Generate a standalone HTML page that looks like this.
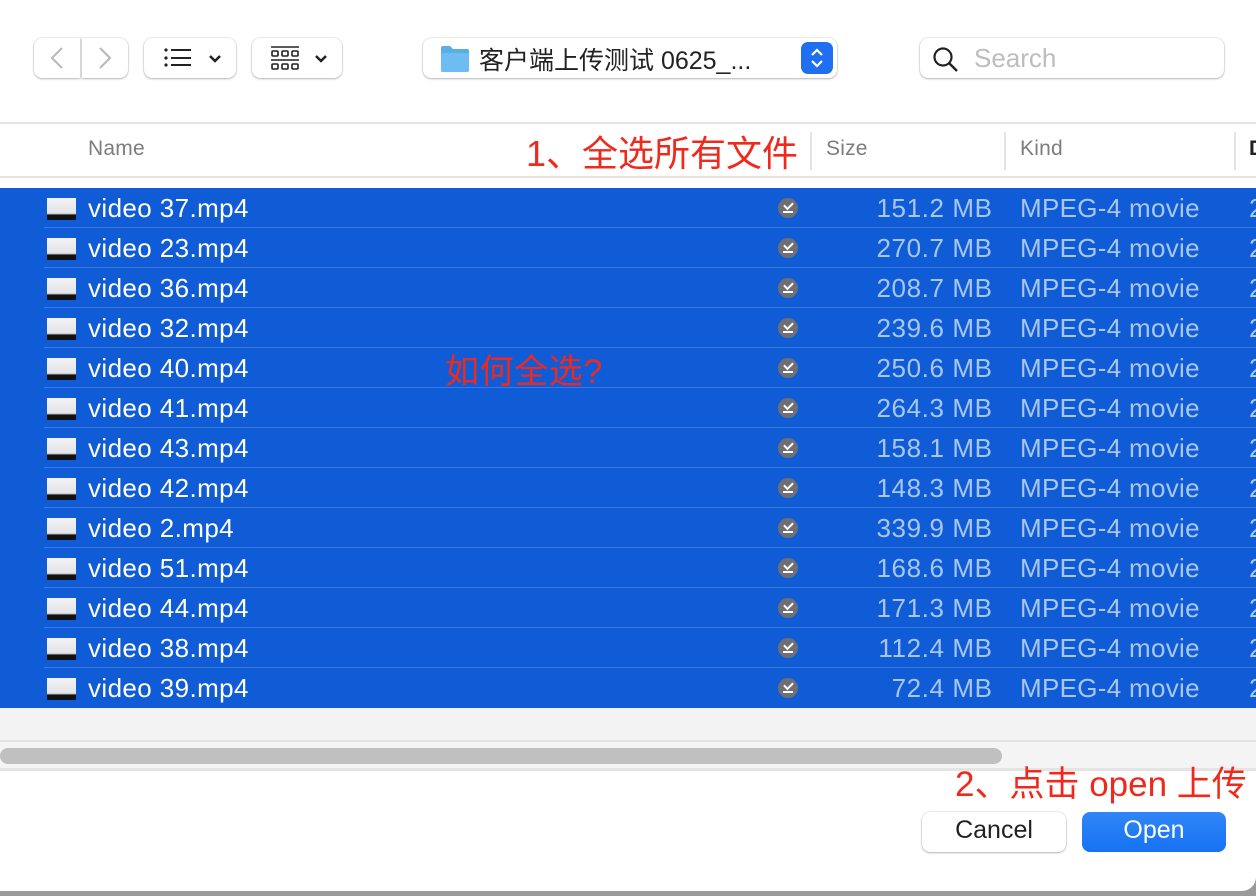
<!DOCTYPE html>
<html><head><meta charset="utf-8"><style>
*{margin:0;padding:0;box-sizing:border-box}
body{width:1256px;height:896px;overflow:hidden;background:#9a9a9a;font-family:"Liberation Sans","Noto Sans CJK SC",sans-serif;position:relative}
.win{position:absolute;left:0;top:0;width:1256px;height:891px;background:#fff;border-bottom-right-radius:14px;overflow:hidden}
.btn{position:absolute;background:#fff;border-radius:8px;box-shadow:0 0 0 0.5px rgba(0,0,0,.12),0 1px 2px rgba(0,0,0,.25)}
.abs{position:absolute}
.hdr{position:absolute;top:122px;left:0;width:1256px;height:56px;border-top:2px solid #e3e3e3;border-bottom:2px solid #e3e3e3;background:#fff}
.hdr span{position:absolute;top:13px;font-size:21px;color:#7d7d7d;letter-spacing:0.2px}
.sep{position:absolute;top:8px;width:2px;height:38px;background:#e3e3e3}
.rows{position:absolute;top:188px;left:0;width:1256px;height:520px;background:#0f5cd6}
.row{position:relative;height:40px}
.row::after{content:"";position:absolute;left:44px;right:0;bottom:0;height:1px;background:#3a7ae0}
.row:last-child::after{display:none}
.th{position:absolute;left:47px;top:10px;width:29px;height:22px;background:linear-gradient(#f2f2f4 0,#e4e4e8 70%,#111 78%,#111 100%)}
.nm{position:absolute;left:88px;top:5px;font-size:26px;color:#fff;letter-spacing:0.4px}
.ic{position:absolute;left:778px;top:10px;width:20px;height:20px;border-radius:50%;background:#6e6e73}
.ic::before{content:"";position:absolute;left:6px;top:4px;width:7px;height:4px;border-left:2px solid #fff;border-bottom:2px solid #fff;transform:rotate(-45deg)}
.ic::after{content:"";position:absolute;left:5px;top:13px;width:10px;height:2px;background:#fff}
.sz{position:absolute;right:264px;top:5px;font-size:26px;color:#a9c6f2;letter-spacing:0.6px;margin-right:-0.6px}
.kd{position:absolute;left:1020px;top:5px;font-size:26px;color:#a9c6f2;letter-spacing:0.3px}
.dt{position:absolute;left:1249px;top:5px;font-size:26px;color:#a9c6f2}
.red{position:absolute;color:#ee2a1e;white-space:nowrap}
</style></head><body><div class="win">
<div class="btn" style="left:34px;top:38px;width:46px;height:40px;border-radius:8px 0 0 8px"></div>
<div class="btn" style="left:82px;top:38px;width:46px;height:40px;border-radius:0 8px 8px 0"></div>
<svg class="abs" style="left:34px;top:38px" width="94" height="40"><path d="M28 10 L18 20 L28 30" stroke="#b8b8b8" stroke-width="2" fill="none"/><path d="M66 10 L76 20 L66 30" stroke="#b8b8b8" stroke-width="2" fill="none"/></svg>
<div class="btn" style="left:144px;top:38px;width:92px;height:40px"></div>
<svg class="abs" style="left:144px;top:38px" width="92" height="40"><g fill="#222"><circle cx="22" cy="12" r="1.6"/><circle cx="22" cy="20" r="1.6"/><circle cx="22" cy="27" r="1.6"/><rect x="27" y="11" width="20" height="2"/><rect x="27" y="19" width="20" height="2"/><rect x="27" y="26" width="20" height="2"/></g><path d="M66 18 L71 23 L76 18" stroke="#222" stroke-width="2.5" fill="none"/></svg>
<div class="btn" style="left:252px;top:38px;width:90px;height:40px"></div>
<svg class="abs" style="left:252px;top:38px" width="90" height="40"><g stroke="#222" stroke-width="1.6" fill="none"><line x1="19" y1="9" x2="47" y2="9"/><rect x="20" y="13" width="6" height="5" rx="1"/><rect x="30" y="13" width="6" height="5" rx="1"/><rect x="40" y="13" width="6" height="5" rx="1"/><line x1="19" y1="22" x2="47" y2="22"/><rect x="20" y="26" width="6" height="5" rx="1"/><rect x="30" y="26" width="6" height="5" rx="1"/><rect x="40" y="26" width="6" height="5" rx="1"/></g><path d="M64 18 L69 23 L74 18" stroke="#222" stroke-width="2.5" fill="none"/></svg>
<div class="btn" style="left:423px;top:38px;width:414px;height:40px"></div>
<svg class="abs" style="left:440px;top:44px" width="30" height="30"><path d="M1 4 Q1 2 3 2 L10 2 L13 5 L27 5 Q29 5 29 7 L29 26 Q29 28 27 28 L3 28 Q1 28 1 26Z" fill="#5aaee8"/><rect x="1" y="9" width="28" height="19" rx="2" fill="#6dbdf2"/></svg>
<div class="abs" style="left:479px;top:41px;font-size:25px;color:#222">客户端上传测试 0625_...</div>
<div class="abs" style="left:801px;top:42px;width:32px;height:32px;border-radius:7px;background:#1f6ff0"></div>
<svg class="abs" style="left:801px;top:42px" width="32" height="32"><path d="M11 13 L16 8 L21 13 M11 19 L16 24 L21 19" stroke="#fff" stroke-width="2.2" fill="none"/></svg>
<div class="btn" style="left:920px;top:38px;width:304px;height:40px"></div>
<svg class="abs" style="left:930px;top:44px" width="30" height="30"><circle cx="13" cy="13" r="8.5" stroke="#222" stroke-width="2.2" fill="none"/><line x1="19" y1="19" x2="27" y2="27" stroke="#222" stroke-width="2.5"/></svg>
<div class="abs" style="left:974px;top:43px;font-size:26px;color:#bdbdbd">Search</div>
<div class="hdr"><span style="left:88px">Name</span><div class="sep" style="left:810px"></div><span style="left:826px">Size</span><div class="sep" style="left:1004px"></div><span style="left:1020px">Kind</span><div class="sep" style="left:1234px"></div><span style="left:1249px;color:#222;font-weight:bold">D</span></div>
<div class="red" style="left:526px;top:125px;font-size:36px">1、全选所有文件</div>
<div class="rows">
<div class="row"><div class="th"></div><div class="nm">video 37.mp4</div><div class="ic"></div><div class="sz">151.2 MB</div><div class="kd">MPEG-4 movie</div><div class="dt">2</div></div>
<div class="row"><div class="th"></div><div class="nm">video 23.mp4</div><div class="ic"></div><div class="sz">270.7 MB</div><div class="kd">MPEG-4 movie</div><div class="dt">2</div></div>
<div class="row"><div class="th"></div><div class="nm">video 36.mp4</div><div class="ic"></div><div class="sz">208.7 MB</div><div class="kd">MPEG-4 movie</div><div class="dt">2</div></div>
<div class="row"><div class="th"></div><div class="nm">video 32.mp4</div><div class="ic"></div><div class="sz">239.6 MB</div><div class="kd">MPEG-4 movie</div><div class="dt">2</div></div>
<div class="row"><div class="th"></div><div class="nm">video 40.mp4</div><div class="ic"></div><div class="sz">250.6 MB</div><div class="kd">MPEG-4 movie</div><div class="dt">2</div></div>
<div class="row"><div class="th"></div><div class="nm">video 41.mp4</div><div class="ic"></div><div class="sz">264.3 MB</div><div class="kd">MPEG-4 movie</div><div class="dt">2</div></div>
<div class="row"><div class="th"></div><div class="nm">video 43.mp4</div><div class="ic"></div><div class="sz">158.1 MB</div><div class="kd">MPEG-4 movie</div><div class="dt">2</div></div>
<div class="row"><div class="th"></div><div class="nm">video 42.mp4</div><div class="ic"></div><div class="sz">148.3 MB</div><div class="kd">MPEG-4 movie</div><div class="dt">2</div></div>
<div class="row"><div class="th"></div><div class="nm">video 2.mp4</div><div class="ic"></div><div class="sz">339.9 MB</div><div class="kd">MPEG-4 movie</div><div class="dt">2</div></div>
<div class="row"><div class="th"></div><div class="nm">video 51.mp4</div><div class="ic"></div><div class="sz">168.6 MB</div><div class="kd">MPEG-4 movie</div><div class="dt">2</div></div>
<div class="row"><div class="th"></div><div class="nm">video 44.mp4</div><div class="ic"></div><div class="sz">171.3 MB</div><div class="kd">MPEG-4 movie</div><div class="dt">2</div></div>
<div class="row"><div class="th"></div><div class="nm">video 38.mp4</div><div class="ic"></div><div class="sz">112.4 MB</div><div class="kd">MPEG-4 movie</div><div class="dt">2</div></div>
<div class="row"><div class="th"></div><div class="nm">video 39.mp4</div><div class="ic"></div><div class="sz">72.4 MB</div><div class="kd">MPEG-4 movie</div><div class="dt">2</div></div>
</div>
<div class="red" style="left:445px;top:344px;font-size:34px;letter-spacing:0.6px">如何全选?</div>
<div class="abs" style="left:0;top:708px;width:1256px;height:32px;background:#f2f3f2"></div>
<div class="abs" style="left:0;top:740px;width:1256px;height:31px;background:#f4f4f4;border-top:2px solid #e4e4e4;border-bottom:3px solid #e4e4e4"></div>
<div class="abs" style="left:0;top:748px;width:1002px;height:16px;border-radius:8px;background:#c0c0c0"></div>
<div class="red" style="left:955px;top:756px;font-size:35px">2、点击 open 上传</div>
<div class="btn" style="left:922px;top:812px;width:144px;height:40px"></div>
<div class="abs" style="left:922px;top:816px;width:144px;text-align:center;font-size:25px;color:#222">Cancel</div>
<div class="abs" style="left:1082px;top:812px;width:144px;height:40px;border-radius:8px;background:linear-gradient(#2f86f6,#1672f3)"></div>
<div class="abs" style="left:1082px;top:816px;width:144px;text-align:center;font-size:25px;color:#fff">Open</div>
</div></body></html>
